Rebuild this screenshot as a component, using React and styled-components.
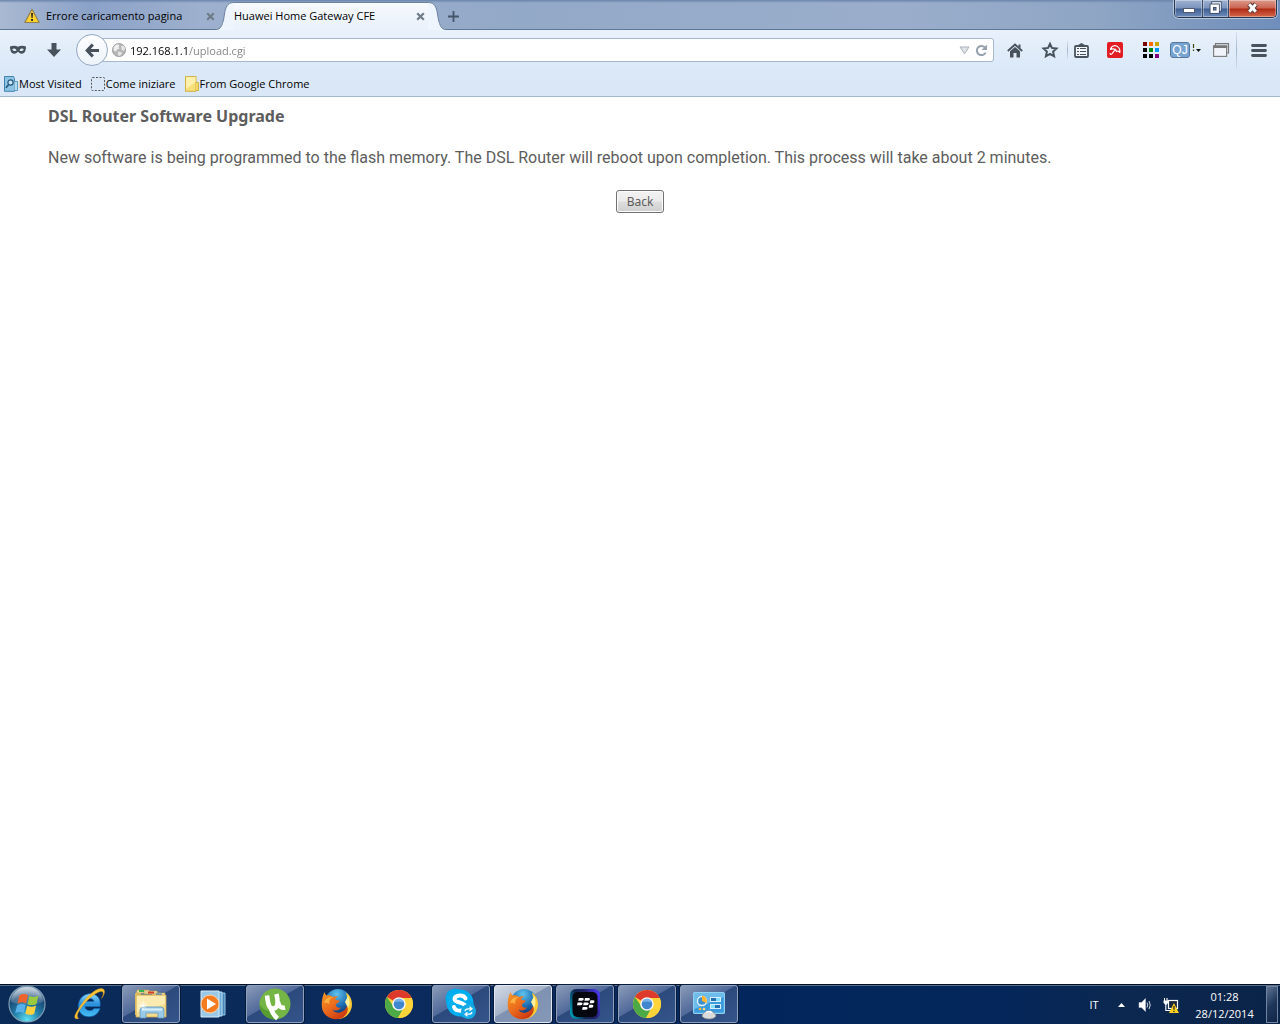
import * as React from "react"

import styled, { createGlobalStyle, css } from "styled-components"

const GlobalStyle = createGlobalStyle`
	* {
		box-sizing: border-box;
	}
	body {
		margin: 0;
		background: #fff;
		font-family: "Open Sans", "Noto Sans", sans-serif;
		font-size: 11px;
		color: #000;
	}
	button {
		padding: 0;
		border: 0;
		background: none;
		font: inherit;
		color: inherit;
	}
	svg {
		display: block;
		flex: none;
		overflow: visible;
	}
`

const Screen = styled.div`
	display: flex;
	flex-direction: column;
	min-height: 100vh;
`

/* ---------- title bar and tabs ---------- */

const TitleBar = styled.header`
	display: flex;
	height: 30px;
	background:
		linear-gradient(#6a84ab 0, rgba(120, 146, 184, 0) 3px),
		linear-gradient(
			90deg,
			#a9b9d2 0,
			#8ba2c8 90px,
			#9db0cd 200px,
			#93a9c8 520px,
			#9aaecb 900px,
			#8ea5c4 1100px,
			#6f8ebb 100%
		);
	box-shadow: inset 0 -1px #5f7796;
`

const Tabs = styled.div`
	display: flex;
	flex: 1;
	min-width: 0;
`

const Tab = styled.div`
	display: flex;
	align-items: center;
	gap: 6px;
	width: 216px;
	height: 30px;
	padding: 2px 0 0 24px;
	white-space: nowrap;
`

const ActiveTab = styled.div`
	display: flex;
	width: 230px;
	height: 30px;
`

const ActiveTabBody = styled.div`
	display: flex;
	align-items: center;
	flex: 1;
	height: 28px;
	margin-top: 2px;
	padding-bottom: 1px;
	border-top: 1px solid #6b82a2;
	background: linear-gradient(#f6f9fd, #e9f1fb);
	white-space: nowrap;
`

const TabTitle = styled.span`
	flex: 1;
	line-height: 16px;
`

const TabClose = styled.button`
	width: 12px;
	height: 12px;
	margin-right: ${(props) => (props.$active ? 2 : 0)}px;
	display: flex;
	align-items: center;
	justify-content: center;
`

const NewTab = styled.button`
	display: flex;
	align-items: center;
	justify-content: center;
	width: 14px;
	height: 30px;
	padding-top: 2px;
`

const WindowControls = styled.div`
	display: flex;
	height: 18px;
	margin-right: 3px;
	border: 1px solid #27364f;
	border-top: 0;
	border-radius: 0 0 5px 5px;
	overflow: hidden;
	box-shadow: 0 0 0 1px rgba(255, 255, 255, 0.45);
`

const WindowButton = styled.button`
	display: flex;
	align-items: center;
	justify-content: center;
	width: ${(props) => props.$width}px;
	border-right: 1px solid #3b4b68;
	background: linear-gradient(#9eb2d1 0, #7b94bd 8px, #3f5f94 9px, #6f8dbb 100%);
	box-shadow: inset 0 0 0 1px rgba(255, 255, 255, 0.35);

	${(props) =>
		props.$danger &&
		css`
			border-right: 0;
			background: linear-gradient(
				#dc9a8c 0,
				#cb6350 8px,
				#b02a14 9px,
				#d4694c 100%
			);
		`}
`

/* ---------- toolbars ---------- */

const Toolbars = styled.div`
	border-bottom: 1px solid #a3b9d3;
	background: linear-gradient(#e9f1fb, #dae8f8 40px, #d9e7f7);
`

const NavBar = styled.nav`
	display: flex;
	align-items: center;
	height: 40px;
`

const IconButton = styled.button`
	display: flex;
	align-items: center;
	justify-content: center;
	flex: none;
	width: ${(props) => props.$width}px;
	height: 36px;
`

const BackButton = styled.button`
	position: relative;
	display: flex;
	align-items: center;
	justify-content: center;
	flex: none;
	width: 32px;
	height: 32px;
	margin-left: 4px;
	border: 1px solid #93a8c2;
	border-radius: 50%;
	background: linear-gradient(#fdfeff, #edf3fa);
`

const AddressBar = styled.div`
	display: flex;
	align-items: center;
	flex: 1;
	min-width: 0;
	height: 24px;
	margin: 0 3px 0 -8px;
	padding: 0 3px 0 11px;
	border: 1px solid #a5b8d0;
	border-radius: 0 3px 3px 0;
	background: #fff;
`

const AddressInput = styled.input`
	flex: 1;
	min-width: 0;
	margin-left: 4px;
	padding: 1px 0 0;
	border: 0;
	outline: 0;
	font: inherit;
	line-height: 16px;
	/* host in black, path in grey */
	color: transparent;
	background: linear-gradient(90deg, #000 59px, #808080 59px);
	-webkit-background-clip: text;
	background-clip: text;
`

const Divider = styled.span`
	flex: none;
	width: 1px;
	height: ${(props) => props.$height}px;
	background: linear-gradient(
		rgba(150, 172, 198, 0.2),
		#a4b6cb,
		rgba(150, 172, 198, 0.2)
	);
`

const BookmarksBar = styled.div`
	display: flex;
	align-items: center;
	gap: 9px;
	height: 26px;
	padding: 1px 0 0 4px;
`

const Bookmark = styled.a`
	display: flex;
	align-items: center;
	gap: 1px;
	color: #000;
	line-height: 16px;
	text-decoration: none;
	white-space: nowrap;
`

/* ---------- page ---------- */

const Content = styled.main`
	flex: 1;
	padding: 9px 48px;
	color: #5d5d5d;
	font-size: 16px;
	line-height: 20px;
`

const Heading = styled.h1`
	margin: 0 0 22px;
	font-family: "Noto Sans", "Open Sans", sans-serif;
	font-size: 16px;
	font-weight: 700;
`

const Message = styled.p`
	margin: 0 0 22px;
	font-family: Roboto, "Noto Sans", sans-serif;
`

const FormRow = styled.form`
	display: flex;
	justify-content: center;
`

const FormButton = styled.button`
	&& {
		width: 48px;
		height: 23px;
		padding-top: 1px;
		border: 1px solid #707070;
		border-radius: 3px;
		background: linear-gradient(#f2f2f2 0, #ebebeb 10px, #dddddd 11px, #cfcfcf);
		box-shadow: inset 0 0 0 1px #fcfcfc;
		color: #5d5d5d;
		font-family: "Noto Sans", "Open Sans", sans-serif;
		font-size: 12px;
		line-height: 20px;
	}
`

/* ---------- taskbar ---------- */

const Taskbar = styled.footer`
	display: flex;
	align-items: flex-start;
	height: 40px;
	border-top: 1px solid #050e20;
	box-shadow: inset 0 1px #53708f;
	background: linear-gradient(
		90deg,
		#0a2a57 0,
		#0b2b60 45%,
		#02265c 60%,
		#04265a 78%,
		#0c2850 88%,
		#0a2348 100%
	);
	color: #fff;
`

const StartButton = styled.button`
	display: flex;
	align-items: center;
	justify-content: center;
	width: 54px;
	height: 38px;
	margin-right: 6px;
`

const Tasks = styled.div`
	display: flex;
	gap: 4px;
	flex: 1;
`

const Task = styled.button`
	display: flex;
	align-items: center;
	justify-content: center;
	width: 58px;
	height: 38px;
	border: 1px solid transparent;
	border-radius: 3px;

	${(props) =>
		props.$open &&
		css`
			border-color: #8fa0bc;
			box-shadow: 0 0 0 1px #061a3c;
			background: linear-gradient(
				150deg,
				#8a9bb8 0,
				#50699a 45%,
				#2c4a7c 46%,
				#35548a 100%
			);
		`}

	${(props) =>
		props.$focused &&
		css`
			border-color: #e3e8f0;
			background: linear-gradient(
				150deg,
				#d5dbe6 0,
				#a3b1c8 45%,
				#7f92b1 46%,
				#8598b8 100%
			);
		`}
`

const Tray = styled.div`
	display: flex;
	align-items: center;
	height: 39px;
`

const TrayButton = styled.button`
	display: flex;
	align-items: center;
	justify-content: center;
	width: ${(props) => props.$width}px;
	height: 36px;
`

const Clock = styled.time`
	width: 83px;
	line-height: 17px;
	text-align: center;
`

const ShowDesktop = styled.button`
	width: 12px;
	height: 37px;
	margin-right: 2px;
	border: 1px solid #71839f;
	background: linear-gradient(135deg, #5f7493, #20375c 50%, #0f2649);
`

/* ---------- small icons ---------- */

const ink = "#47525c"

const WarningIcon = ({ size = 16 }) => (
	<svg width={size} height={size} viewBox="0 0 16 16">
		<path
			d="M8 1.2 L15.2 14.5 H.8Z"
			fill="#ffd02e"
			stroke="#8f8154"
			strokeWidth="1.2"
			strokeLinejoin="round"
		/>
		<path d="M7.1 5h1.9l-.4 5H7.5z" fill="#222" />
		<rect x="7.1" y="11" width="1.9" height="1.9" fill="#222" />
	</svg>
)

const CloseIcon = () => (
	<svg width="9" height="9" viewBox="0 0 9 9">
		<path d="M1.2 1.2l6.6 6.6M7.8 1.2L1.2 7.8" stroke="#6f7b88" strokeWidth="2.2" />
	</svg>
)

const TabEdge = ({ right }) => (
	<svg width="18" height="30" viewBox="0 0 18 30">
		<g transform={right ? "matrix(-1 0 0 1 18 0)" : undefined}>
			<path
				d="M0 30V29.5C5 29.500 6 25 7.500 20L9 11C10.500 5 13 2.500 18 2.500V30Z"
				fill="#eff5fc"
			/>
			<path
				d="M0 29.500C5 29.500 6 25 7.500 20L9 11C10.500 5 13 2.500 18 2.500"
				fill="none"
				stroke="#6b82a2"
			/>
		</g>
	</svg>
)

const PlusIcon = () => (
	<svg width="11" height="11" viewBox="0 0 11 11">
		<path d="M5.5 0v11M0 5.5h11" stroke="#46566a" strokeWidth="1.8" />
	</svg>
)

const MinimizeIcon = () => (
	<svg width="12" height="14" viewBox="0 0 12 14">
		<rect x=".5" y="6.5" width="11" height="4" fill="#fff" stroke="#4d5a70" />
	</svg>
)

const RestoreIcon = () => (
	<svg width="13" height="15" viewBox="0 0 13 15" fill="none">
		<rect x="4" y="2" width="7" height="7" stroke="#3f4f6d" strokeWidth="3.4" />
		<rect x="4" y="2" width="7" height="7" stroke="#fff" strokeWidth="1.6" />
		<rect x="2.2" y="4.2" width="7" height="7" fill="#fff" stroke="#3f4f6d" strokeWidth="3.2" />
		<rect x="2.200" y="4.200" width="7" height="7" fill="#fff" stroke="#fff" strokeWidth="1.4" />
		<rect x="4.500" y="6.500" width="2.500" height="2.500" fill="#6d82a8" stroke="#3f4f6d" />
	</svg>
)

const CloseWindowIcon = () => (
	<svg width="13" height="14" viewBox="0 0 13 14">
		<path d="M3 2l7 8M10 2l-7 8" stroke="#5b3a3a" strokeWidth="5" />
		<path d="M3.2 2.2l6.6 7.6M9.8 2.2L3.2 9.8" stroke="#fff" strokeWidth="3" />
	</svg>
)

const MaskIcon = () => (
	<svg width="16" height="10" viewBox="0 0 16 10">
		<path
			d="M0 1.500C3 .3 6 .6 8 1.700C10 .6 13 .3 16 1.500C16 5.500 14.800 8.500 12 8.800C10 9 9 7 8 7S6 9 4 8.800C1.200 8.500 0 5.500 0 1.500Z"
			fill={ink}
		/>
		<path d="M2.200 4.300C3.500 3 5.500 3.400 6.600 5.200C5 6.600 3 6.300 2.200 4.300ZM13.800 4.300C12.500 3 10.500 3.400 9.400 5.200C11 6.600 13 6.300 13.800 4.300Z" fill="#e3edf9" />
	</svg>
)

const DownloadIcon = () => (
	<svg width="14" height="14" viewBox="0 0 14 14">
		<path d="M4.500 0h5v6.500H14L7 14L0 6.500h4.500z" fill={ink} />
	</svg>
)

const BackIcon = () => (
	<svg width="14" height="15" viewBox="0 0 14 15">
		<path d="M7.800 1.500L2.300 7.500l5.500 6M3 7.500h11" fill="none" stroke={ink} strokeWidth="3.200" />
	</svg>
)

const GlobeIcon = () => (
	<svg width="14" height="14" viewBox="0 0 14 14">
		<circle cx="7" cy="7" r="6.600" fill="#b4b4b4" stroke="#9a9a9a" strokeWidth=".8" />
		<path d="M2 3.500L5 1.200L7.500 2L6.500 4L7.500 5.500L5 6.800L3.500 9L1.500 7Z" fill="#eee" />
		<path d="M9 3l3-.2 1.200 3.200-1.400 2-2.200-1zM6 8.500l3.200.6.8 1.600-2.500 2.600-1.700-1.800z" fill="#e4e4e4" />
	</svg>
)

const DropIcon = () => (
	<svg width="11" height="9" viewBox="0 0 11 9">
		<path d="M1 1h9L5.500 7.800Z" fill="#e1e4e8" stroke="#a9b2bc" />
	</svg>
)

const ReloadIcon = () => (
	<svg width="13" height="13" viewBox="0 0 13 13">
		<path d="M9.700 3.200A4.600 4.600 0 1 0 10.600 8.600" fill="none" stroke="#96a1ae" strokeWidth="2" />
		<path d="M12 .500V6H6.600Z" fill="#96a1ae" />
	</svg>
)

const HomeIcon = () => (
	<svg width="16" height="15" viewBox="0 0 16 15">
		<path d="M.8 8L8 1.500L15.200 8" fill="none" stroke={ink} strokeWidth="1.800" />
		<path d="M11.500 1.500h2v4l-2-2z" fill={ink} />
		<path d="M3 8.300L8 3.900l5 4.400V14.500H9.500V10h-3v4.500H3z" fill={ink} />
	</svg>
)

const StarIcon = () => (
	<svg width="16" height="16" viewBox="0 0 16 16">
		<path
			d="M8 1.800l1.900 4.100 4.600.5-3.400 3.200 1 4.700L8 12l-4.100 2.300 1-4.700L1.500 6.400 6.100 5.900z"
			fill="none"
			stroke={ink}
			strokeWidth="2"
		/>
	</svg>
)

const ListIcon = () => (
	<svg width="15" height="15" viewBox="0 0 15 15">
		<path d="M4.500 3.500V1.800L7.500 0L10.500 1.800V3.500" fill={ink} />
		<rect x="1" y="3" width="13" height="11" rx="1" fill="#f3f7fc" stroke={ink} strokeWidth="1.800" />
		<path d="M3 5.500h2M3 8.500h2M3 11.500h2M6 5.500h6M6 8.500h6M6 11.500h6" stroke={ink} strokeWidth="1.200" />
	</svg>
)

const UmbrellaIcon = () => (
	<svg width="16" height="16" viewBox="0 0 16 16">
		<rect width="16" height="16" rx="2" fill="#e31b23" />
		<g fill="none" stroke="#fff" strokeWidth="1.200" strokeLinejoin="round">
			<path d="M3.500 7.500C4.500 3 9.500 2.500 12 6C13 7.500 13 9 12.800 10.500C12 9 10.500 8.600 9.500 9.500C8.500 7 6.500 6.200 3.500 7.500Z" />
			<path d="M9 6.800L4.800 11.800C3.900 12.800 2.800 12.200 3.200 11" />
		</g>
	</svg>
)

const dots = [
	"#7b0000", "#ff6a00", "#c8a800",
	"#000", "#008a17", "#0096ff",
	"#000", "#000", "#7d0078",
]

const GridIcon = () => (
	<svg width="16" height="16" viewBox="0 0 16 16">
		{dots.map((color, i) => (
			<rect
				key={i}
				x={(i % 3) * 6}
				y={Math.floor(i / 3) * 6}
				width="4"
				height="4"
				fill={color}
			/>
		))}
	</svg>
)

const QuickJavaIcon = () => (
	<svg width="32" height="16" viewBox="0 0 32 16">
		<rect x=".5" y=".5" width="19" height="15" rx="2.500" fill="#78a4d4" stroke="#56779d" />
		<text x="10" y="12" textAnchor="middle" fontFamily="Liberation Sans" fontSize="12" fill="#fff">
			QJ
		</text>
		<path d="M23.500 2v4M23.500 7.500v1.500" stroke="#3d4a00" strokeWidth="1.200" />
		<path d="M26 7h5l-2.500 3z" fill="#111" />
	</svg>
)

const WindowIcon = () => (
	<svg width="16" height="14" viewBox="0 0 16 14">
		<path d="M2.500 3V.700h13V10H14" fill="none" stroke="#777" strokeWidth="1.200" />
		<rect x=".6" y="3" width="13" height="10.400" fill="#f0f4fa" stroke="#808080" strokeWidth="1.200" />
		<rect x="0" y="2.500" width="14.200" height="2.500" fill="#777" />
	</svg>
)

const MenuIcon = () => (
	<svg width="16" height="13" viewBox="0 0 16 13">
		<path d="M1.500 1.500h13M1.500 6.500h13M1.500 11.500h13" stroke={ink} strokeWidth="2.800" strokeLinecap="round" />
	</svg>
)

const MostVisitedIcon = () => (
	<svg width="14" height="16" viewBox="0 0 14 16">
		<path d="M.5.500h9l1 2v12.800H.5z" fill="#8fc3e4" stroke="#3e83b0" />
		<path d="M10.500 5.500h3v9h-3" fill="#b6daf0" stroke="#5b9cc6" />
		<circle cx="6.500" cy="6.500" r="2.600" fill="#c9e6f6" stroke="#24577c" strokeWidth="1.200" />
		<path d="M4.700 8.600L2 11.800" stroke="#24577c" strokeWidth="1.600" />
	</svg>
)

const DashedIcon = () => (
	<svg width="14" height="14" viewBox="0 0 14 14">
		<rect x=".5" y=".5" width="13" height="13" rx="1" fill="none" stroke="#555" strokeDasharray="2 1.500" />
	</svg>
)

const FolderIcon = () => (
	<svg width="14" height="16" viewBox="0 0 14 16">
		<path d="M.5.500h10.500v14.800H.5z" fill="#f7df78" stroke="#d2b045" />
		<path d="M1 1h9.500v5L1 13z" fill="#fdf0ac" />
		<path d="M11 6.500h2.500v8H11" fill="#f3d768" stroke="#d2b045" />
	</svg>
)

/* ---------- taskbar icons ---------- */

const Flag = () => (
	<g>
		<path d="M11 12C14 10.400 16.500 10.600 18.700 11.800L17 18.300C14.500 17.200 12 17.200 9.300 18.500Z" fill="#f0632a" />
		<path d="M20 12.300C22.500 13.500 25 13.500 28 12.200L26.300 18.700C23.500 20 21 19.900 18.300 18.900Z" fill="#9bcb3c" />
		<path d="M9 19.700C11.700 18.400 14.200 18.500 16.700 19.600L15 26C12.500 24.900 10 24.900 7.300 26.200Z" fill="#56b0ea" />
		<path d="M18 20.200C20.500 21.300 23.200 21.300 26 20L24.300 26.500C21.500 27.800 19 27.700 16.300 26.600Z" fill="#ffd13f" />
	</g>
)

const StartIcon = () => (
	<svg width="38" height="38" viewBox="0 0 38 38">
		<defs>
			<radialGradient id="orb" cx="50%" cy="95%" r="90%">
				<stop offset="0" stopColor="#5fe2f4" />
				<stop offset=".4" stopColor="#2380aa" />
				<stop offset=".75" stopColor="#1a4977" />
				<stop offset="1" stopColor="#7f9ab4" />
			</radialGradient>
			<linearGradient id="gloss" x1="0" y1="0" x2="0" y2="1">
				<stop offset="0" stopColor="#fff" stopOpacity=".6" />
				<stop offset="1" stopColor="#fff" stopOpacity=".1" />
			</linearGradient>
		</defs>
		<circle cx="19" cy="19" r="18" fill="url(#orb)" stroke="#7e9db2" strokeWidth="1.200" />
		<path d="M3 17A16 15 0 0 1 35 17C25 21 13 21 3 17Z" fill="url(#gloss)" />
		<g transform="translate(-1 -4.500) scale(1.120 1.250)">
			<Flag />
		</g>
	</svg>
)

const ExplorerEIcon = () => (
	<svg width="34" height="34" viewBox="0 0 34 34">
		<defs>
			<linearGradient id="ie" x1="0" y1="0" x2="0" y2="1">
				<stop offset="0" stopColor="#8bdcff" />
				<stop offset=".45" stopColor="#2a8fdc" />
				<stop offset="1" stopColor="#45c0f5" />
			</linearGradient>
		</defs>
		<path
			d="M28 19.500H13C13 24 20 25 22 21.500H28C25.500 30 16.500 31 11.500 28.500C4.500 25 4.500 13 12 8.500C20 4 30 8.500 28 19.500ZM13 14.500H22C21.500 10.500 14.500 10.500 13 14.500Z"
			fill="url(#ie)"
			stroke="#1767b0"
			strokeWidth=".7"
		/>
		<path
			d="M6.500 22C1 30 2 33 7 31.200C4 30.600 5 26 10 19.500C16 11.500 26 3.500 30 4.500C32 5 31.500 8 29.500 11.500C33.500 6 33.500 2 29.500 1.500C23 1 12 12 6.500 22Z"
			fill="#f8c332"
			stroke="#e29a1c"
			strokeWidth=".4"
		/>
	</svg>
)

const LibraryIcon = () => (
	<svg width="36" height="34" viewBox="0 0 36 34">
		<path d="M2 7V28H8V4H4Z" fill="#e3bf61" />
		<path d="M4 3h12l1 3h-13zM11 4h13l1 3H11zM19 6h13v4H19z" fill="#f5e6ab" stroke="#b7974c" strokeWidth=".6" />
		<rect x="6" y="3" width="5" height="2" fill="#34b449" />
		<rect x="15" y="4.500" width="6" height="2" fill="#d93c2b" />
		<rect x="23" y="6.500" width="6" height="2" fill="#3e83d8" />
		<path d="M3 8H33V30H3Z" fill="#f5dc8c" stroke="#cfa950" strokeWidth=".8" />
		<path d="M4 9H32V17L4 25Z" fill="#fcebb0" />
		<path d="M7 31V23Q7 20 10 20H28Q31 20 31 23V31H25V26H13V31Z" fill="#9acae8" stroke="#6298bd" strokeWidth=".8" />
		<path d="M9 22.500H29" stroke="#d9f0fb" strokeWidth="2" />
		<path d="M10 14v9M5.500 18.500h9M7 15.500l6 6M13 15.500l-6 6" stroke="#fff" strokeWidth=".8" />
	</svg>
)

const MediaIcon = () => (
	<svg width="28" height="28" viewBox="0 0 28 28">
		<path d="M12 3H26V25H12Z" fill="#4a86b5" stroke="#8fc3e6" />
		<path d="M6 2H23V26H6Z" fill="#6dabd6" stroke="#b9dff4" />
		<path d="M2 1H20V27H2Z" fill="#9ac9e7" stroke="#d5edf9" />
		<circle cx="11" cy="14" r="9" fill="#f47b20" stroke="#ffd3a8" />
		<path d="M8 8.500L17 14L8 19.500Z" fill="#fff" />
	</svg>
)

/* the mark is drawn with strokes, it is wider and rounder than the letter */
const TorrentIcon = () => (
	<svg width="32" height="32" viewBox="0 0 32 32">
		<circle cx="16" cy="16" r="15.500" fill="#74b545" />
		<path d="M.5 16A15.500 15.500 0 0 0 19 31.200C16 29 13 26 12 22C8 24 3 21 .5 16Z" fill="#579c31" />
		<path
			d="M8 7.500C9 16 10 21.500 15 20.500C19 19.500 19.500 15 17.500 6M19 14C20 18 21.500 20.500 26 19.500M12 21C13.500 25.500 15.500 28 18.500 30.500"
			fill="none"
			stroke="#fff"
			strokeWidth="4.600"
		/>
	</svg>
)

const FirefoxIcon = () => (
	<svg width="32" height="32" viewBox="0 0 32 32">
		<defs>
			<linearGradient id="fox" x1="0" y1="0" x2=".8" y2="1">
				<stop offset="0" stopColor="#f59a23" />
				<stop offset=".5" stopColor="#ec6c1d" />
				<stop offset="1" stopColor="#c9340f" />
			</linearGradient>
			<radialGradient id="earth" cx="45%" cy="20%" r="75%">
				<stop offset="0" stopColor="#5fc4ee" />
				<stop offset=".6" stopColor="#1f6fb4" />
				<stop offset="1" stopColor="#123a78" />
			</radialGradient>
		</defs>
		<circle cx="17" cy="14" r="13" fill="url(#earth)" />
		<path d="M25 4.500C30 8 32 14 30.500 20C28.500 27.500 22 31.500 16 31C22 28 26 23 26.500 17C27 12 26 9 25 4.500Z" fill="#ffcb34" />
		<path d="M27 8C29 12 29 17 27 20L24 14Z" fill="#fff0a0" />
		<path
			d="M3.500 4C4 5.500 4.500 6.500 5.500 7.500C8 7 10 7.500 12 9C14 8 15.500 8 17 8.500C15 9.500 14 11 14.500 12L18.500 12.500C19 14.500 16 15 15 16C14.500 19 17 20.500 20 19.500C18.500 22.500 14 23.500 11.500 21.500C14 26.500 23 26 26 18C28 22 26 27 22 29.500C13 34 2.500 29 1 20C.3 15 1 9 3.500 4Z"
			fill="url(#fox)"
		/>
		<path d="M3 15C4 11 7 9 12 9C9 10 7.500 13 8.500 16C6 14.500 4.500 14.500 3 15Z" fill="#fbb040" />
	</svg>
)

const ChromeIcon = () => (
	<svg width="30" height="30" viewBox="0 0 30 30">
		<circle cx="15" cy="15" r="14" fill="#ffd43b" />
		<path d="M15 15L2.900 8A14 14 0 0 1 27.600 9H15Z" fill="#dd3a2b" />
		<path d="M2.900 8A14 14 0 0 0 14 29L20.200 18L15 15L9.800 18Z" fill="#4ba946" />
		<path d="M27.600 9A14 14 0 0 1 14 29L20.200 18Q22 14 19 9Z" fill="#ffd43b" />
		<circle cx="15" cy="15" r="6.800" fill="#f6f6f6" />
		<circle cx="15" cy="15" r="5.300" fill="#3f86cf" />
		<path d="M10 13.500A5.200 5.200 0 0 1 20 13.500Q15 11.500 10 13.500Z" fill="#79b4e8" />
	</svg>
)

const SkypeIcon = () => (
	<svg width="32" height="32" viewBox="0 0 32 32">
		<circle cx="10" cy="10" r="9.500" fill="#00a9e9" />
		<circle cx="15" cy="15" r="13.500" fill="#00aff0" />
		<circle cx="21" cy="21" r="9" fill="#00a9e9" />
		<path
			d="M20.500 10.500C19 6.500 10 6.500 9.500 11C9.500 15.500 20.500 13.500 20.500 19C20 24 10.500 24 9 19"
			fill="none"
			stroke="#fff"
			strokeWidth="4"
			strokeLinecap="round"
		/>
		<circle cx="23.500" cy="23.500" r="7.500" fill="#17a9e5" />
		<path d="M20 23Q20.500 20.800 23 20.800H26M24.500 18.800L27 20.800L24.500 22.800M27 24Q26.500 26.200 24 26.200H21M22.500 24.200L20 26.200L22.500 28.200" fill="none" stroke="#fff" strokeWidth="1.200" />
	</svg>
)

const BlackBerryIcon = () => (
	<svg width="32" height="32" viewBox="0 0 32 32">
		<defs>
			<linearGradient id="bb" x1="0" y1=".7" x2="1" y2=".3">
				<stop offset="0" stopColor="#0094ae" />
				<stop offset=".35" stopColor="#10254d" />
				<stop offset=".65" stopColor="#202068" />
				<stop offset="1" stopColor="#4a37e5" />
			</linearGradient>
		</defs>
		<rect x="1" y="1" width="30" height="30" rx="6" fill="url(#bb)" />
		<rect x="3.500" y="4" width="25" height="25" rx="5" fill="#05080e" />
		<g fill="#fff" transform="translate(2.500 2.500) scale(.820)">
			<path d="M9 9h4.500q2 .2 1.400 2-.6 1.500-2.600 1.500H8.200zM16.500 9H21q2 .2 1.400 2-.6 1.500-2.600 1.500h-4.100z" />
			<path d="M7.500 14.500h4.500q2 .2 1.400 2-.6 1.500-2.600 1.500H6.700zM15 14.500h4.500q2 .2 1.400 2-.6 1.500-2.600 1.500h-4.100zM23 12h3.500q2 .2 1.400 2-.6 1.500-2.600 1.500h-3.100z" />
			<path d="M13.700 20h4.500q2 .2 1.400 2-.6 1.500-2.600 1.500h-4.100zM21.700 17.500h3.500q2 .2 1.400 2-.6 1.500-2.600 1.500h-3.100z" />
		</g>
	</svg>
)

const ControlPanelIcon = () => (
	<svg width="32" height="32" viewBox="0 0 32 32">
		<rect x=".6" y="4.600" width="30.800" height="20.800" rx="1" fill="#3c9bdc" stroke="#8fd0f3" strokeWidth="1.200" />
		<path d="M1 5H31V9L1 21Z" fill="#6dbcec" />
		<circle cx="9" cy="13" r="4.500" fill="#3d8fd0" stroke="#e8f5fd" strokeWidth="1.300" />
		<path d="M9 13V7.500A5.500 5.500 0 0 1 13.500 15Z" fill="#ffb52e" />
		<rect x="17.500" y="9.500" width="10" height="4" fill="#2670b0" stroke="#d7effc" />
		<rect x="17.500" y="16.500" width="10" height="4" fill="#2670b0" stroke="#d7effc" />
		<rect x="23" y="10" width="4" height="3" fill="#7fe0ff" />
		<rect x="18" y="17" width="4" height="3" fill="#7fe0ff" />
		<circle cx="7" cy="21" r="1.300" fill="#ffb52e" />
		<circle cx="11" cy="21" r="1.300" fill="#ffd978" />
		<path d="M9 28C10 24.500 13 23 16 23S22 24.500 23 28C21 32 11 32 9 28Z" fill="#dadada" stroke="#8b8b8b" strokeWidth=".7" />
		<path d="M13 24.500Q16 22.500 19 24.500" stroke="#fff" strokeWidth="1.500" fill="none" />
	</svg>
)

const ShowHiddenIcon = () => (
	<svg width="7" height="4" viewBox="0 0 7 4">
		<path d="M0 4L3.500 0L7 4Z" fill="#fff" />
	</svg>
)

const SpeakerIcon = () => (
	<svg width="15" height="16" viewBox="0 0 15 16">
		<path d="M1 5.500h2.500L7.500 1.500v13L3.500 10.500H1z" fill="#fff" stroke="#c7cdd6" strokeWidth=".5" />
		<path d="M9 5.500q1.500 2.500 0 5M11 4q2.500 4 0 8" fill="none" stroke="#d2d9e3" />
	</svg>
)

const NetworkIcon = () => (
	<svg width="16" height="16" viewBox="0 0 16 16">
		<rect x="5.500" y="3.500" width="9" height="8" fill="#18263f" stroke="#fff" strokeWidth="1.200" />
		<path d="M1.500 1v3M4 1v3M2.800 6V13.500H8" stroke="#fff" fill="none" strokeWidth="1.100" />
		<path d="M.5 3.500h4.800v2L4 7.500H1.800L.5 5.500z" fill="#fff" />
		<g transform="translate(6 6) scale(.62)">
			<path d="M8 0L16 16H0Z" fill="#ffd21f" />
			<path d="M8 5v6M8 12.500v2" stroke="#222" strokeWidth="2" />
		</g>
	</svg>
)

const bookmarks = [
	{ label: "Most Visited", icon: MostVisitedIcon },
	{ label: "Come iniziare", icon: DashedIcon },
	{ label: "From Google Chrome", icon: FolderIcon },
]

const tasks = [
	{ name: "Internet Explorer", icon: ExplorerEIcon },
	{ name: "Libraries", icon: LibraryIcon, open: true },
	{ name: "Media Player", icon: MediaIcon },
	{ name: "uTorrent", icon: TorrentIcon, open: true },
	{ name: "Firefox", icon: FirefoxIcon },
	{ name: "Chrome", icon: ChromeIcon },
	{ name: "Skype", icon: SkypeIcon, open: true },
	{ name: "Firefox window", icon: FirefoxIcon, open: true, focused: true },
	{ name: "BlackBerry", icon: BlackBerryIcon, open: true },
	{ name: "Chrome window", icon: ChromeIcon, open: true },
	{ name: "Control Panel", icon: ControlPanelIcon, open: true },
]

const Browser = () => (
	<>
		<TitleBar>
			<Tabs>
				<Tab>
					<WarningIcon />
					<TabTitle>Errore caricamento pagina</TabTitle>
					<TabClose aria-label="Close tab">
						<CloseIcon />
					</TabClose>
				</Tab>
				<ActiveTab>
					<TabEdge />
					<ActiveTabBody>
						<TabTitle>Huawei Home Gateway CFE</TabTitle>
						<TabClose $active aria-label="Close tab">
							<CloseIcon />
						</TabClose>
					</ActiveTabBody>
					<TabEdge right />
				</ActiveTab>
				<NewTab aria-label="New tab">
					<PlusIcon />
				</NewTab>
			</Tabs>
			<WindowControls>
				<WindowButton $width={28} aria-label="Minimize">
					<MinimizeIcon />
				</WindowButton>
				<WindowButton $width={26} aria-label="Restore">
					<RestoreIcon />
				</WindowButton>
				<WindowButton $width={47} $danger aria-label="Close">
					<CloseWindowIcon />
				</WindowButton>
			</WindowControls>
		</TitleBar>
		<Toolbars>
			<NavBar>
				<IconButton $width={36} aria-label="Private browsing">
					<MaskIcon />
				</IconButton>
				<IconButton $width={36} aria-label="Downloads">
					<DownloadIcon />
				</IconButton>
				<BackButton aria-label="Back one page">
					<BackIcon />
				</BackButton>
				<AddressBar>
					<GlobeIcon />
					<AddressInput
						aria-label="Address"
						defaultValue="192.168.1.1/upload.cgi"
						spellCheck={false}
					/>
					<IconButton $width={16} aria-label="History">
						<DropIcon />
					</IconButton>
					<IconButton $width={18} aria-label="Reload">
						<ReloadIcon />
					</IconButton>
				</AddressBar>
				<IconButton $width={36} aria-label="Home">
					<HomeIcon />
				</IconButton>
				<IconButton $width={34} aria-label="Bookmark this page">
					<StarIcon />
				</IconButton>
				<Divider $height={18} />
				<IconButton $width={26} aria-label="Bookmarks">
					<ListIcon />
				</IconButton>
				<IconButton $width={42} aria-label="Avira">
					<UmbrellaIcon />
				</IconButton>
				<IconButton $width={30} aria-label="Apps">
					<GridIcon />
				</IconButton>
				<IconButton $width={40} aria-label="QuickJava">
					<QuickJavaIcon />
				</IconButton>
				<IconButton $width={30} aria-label="Windows">
					<WindowIcon />
				</IconButton>
				<Divider $height={36} />
				<IconButton $width={43} aria-label="Menu">
					<MenuIcon />
				</IconButton>
			</NavBar>
			<BookmarksBar>
				{bookmarks.map(({ label, icon: Icon }) => (
					<Bookmark key={label} href="#">
						<Icon />
						{label}
					</Bookmark>
				))}
			</BookmarksBar>
		</Toolbars>
	</>
)

const App = () => (
	<Screen>
		<GlobalStyle />
		<Browser />
		<Content>
			<Heading>DSL Router Software Upgrade</Heading>
			<Message>
				New software is being programmed to the flash memory. The DSL
				Router will reboot upon completion. This process will take about
				2 minutes.
			</Message>
			<FormRow>
				<FormButton type="button">Back</FormButton>
			</FormRow>
		</Content>
		<Taskbar>
			<StartButton aria-label="Start">
				<StartIcon />
			</StartButton>
			<Tasks>
				{tasks.map(({ name, icon: Icon, open, focused }) => (
					<Task
						key={name}
						$open={open}
						$focused={focused}
						aria-label={name}
					>
						<Icon />
					</Task>
				))}
			</Tasks>
			<Tray>
				<TrayButton $width={30}>IT</TrayButton>
				<TrayButton $width={24} aria-label="Show hidden icons">
					<ShowHiddenIcon />
				</TrayButton>
				<TrayButton $width={25} aria-label="Volume">
					<SpeakerIcon />
				</TrayButton>
				<TrayButton $width={25} aria-label="Network">
					<NetworkIcon />
				</TrayButton>
				<Clock dateTime="2014-12-28T01:28">
					01:28
					<br />
					28/12/2014
				</Clock>
				<ShowDesktop aria-label="Show desktop" />
			</Tray>
		</Taskbar>
	</Screen>
)

export default App
